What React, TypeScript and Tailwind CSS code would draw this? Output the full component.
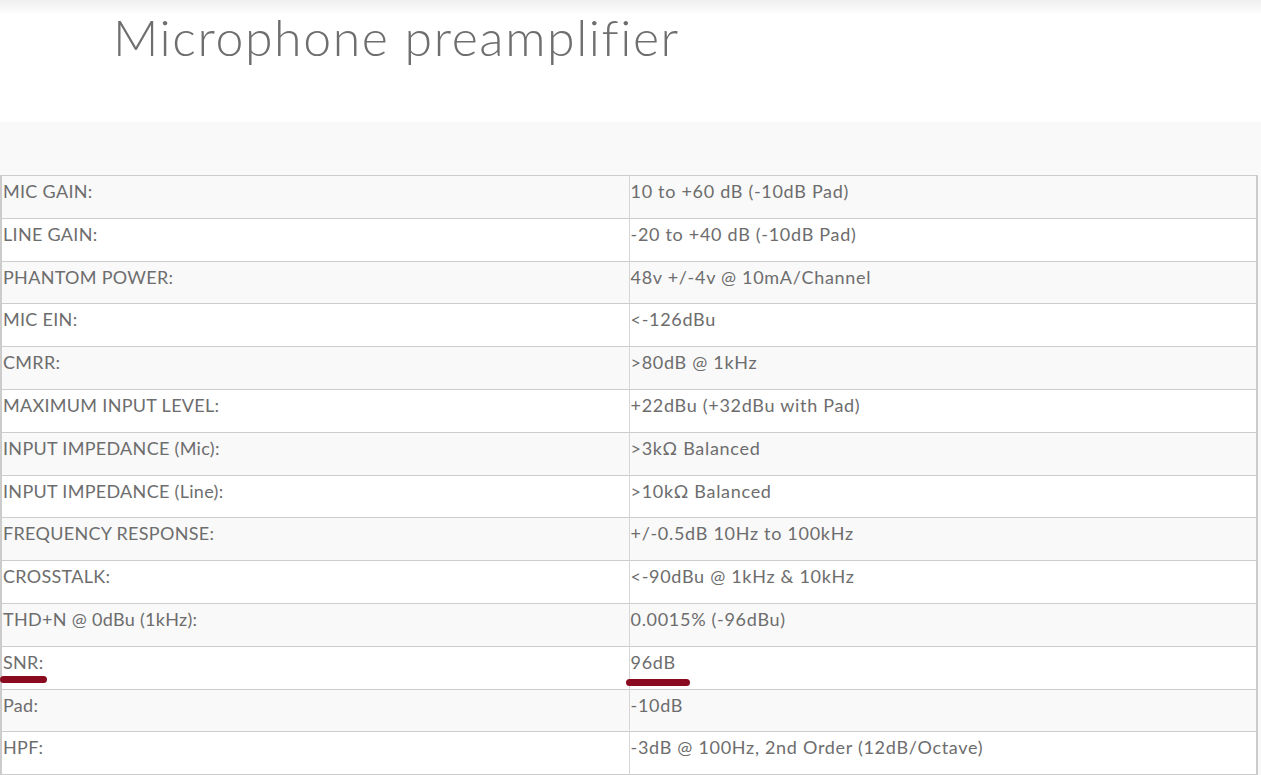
import React from "react";

const rows: [string, string][] = [
  ["MIC GAIN:", "10 to +60 dB (-10dB Pad)"],
  ["LINE GAIN:", "-20 to +40 dB (-10dB Pad)"],
  ["PHANTOM POWER:", "48v +/-4v @ 10mA/Channel"],
  ["MIC EIN:", "<-126dBu"],
  ["CMRR:", ">80dB @ 1kHz"],
  ["MAXIMUM INPUT LEVEL:", "+22dBu (+32dBu with Pad)"],
  ["INPUT IMPEDANCE (Mic):", ">3kΩ Balanced"],
  ["INPUT IMPEDANCE (Line):", ">10kΩ Balanced"],
  ["FREQUENCY RESPONSE:", "+/-0.5dB 10Hz to 100kHz"],
  ["CROSSTALK:", "<-90dBu @ 1kHz & 10kHz"],
  ["THD+N @ 0dBu (1kHz):", "0.0015% (-96dBu)"],
  ["SNR:", "96dB"],
  ["Pad:", "-10dB"],
  ["HPF:", "-3dB @ 100Hz, 2nd Order (12dB/Octave)"],
];

export default function App() {
  return (
    <div
      className="w-[1261px] h-[775px] overflow-hidden bg-white text-[#6d6d6d]"
      style={{ fontFamily: "Lato, 'Open Sans', sans-serif" }}
    >
      <div className="h-[122px] bg-gradient-to-b from-[#efefef] via-white to-white via-[12%]">
        <h1 className="pl-[113px] pt-[5px] text-[50px] leading-[64px] font-light tracking-[1.6px] text-[#6e6e6e]">
          Microphone preamplifier
        </h1>
      </div>
      <div className="bg-[#f9f9f9] pt-[53px]">
        <table className="w-[1258px] border-collapse border-l-2 border-r-2 border-[#cccccc] text-[18px]">
          <tbody>
            {rows.map(([k, v], i) => {
              const isSnr = k === "SNR:";
              return (
                <tr
                  key={k}
                  className={`h-[42.8px] border-t border-b border-[#cccccc] ${i % 2 === 0 ? "bg-[#f9f9f9]" : "bg-white"}`}
                >
                  <td className="w-[628px] align-top pl-[1px] pt-[4px] leading-[22px] tracking-[0.3px] border-r border-[#d6d6d6]">
                    <span className="relative inline-block">
                      {k}
                      {isSnr && (
                        <span className="absolute left-[-3px] top-[25px] h-[7px] w-[47px] rounded-full bg-[#8a0b1f]" />
                      )}
                    </span>
                  </td>
                  <td className="align-top pl-[1px] pt-[4px] leading-[22px] tracking-[0.7px]">
                    <span className="relative inline-block">
                      {v}
                      {isSnr && (
                        <span className="absolute left-[-5px] top-[28px] h-[7px] w-[64px] rounded-full bg-[#8a0b1f]" />
                      )}
                    </span>
                  </td>
                </tr>
              );
            })}
          </tbody>
        </table>
      </div>
    </div>
  );
}
